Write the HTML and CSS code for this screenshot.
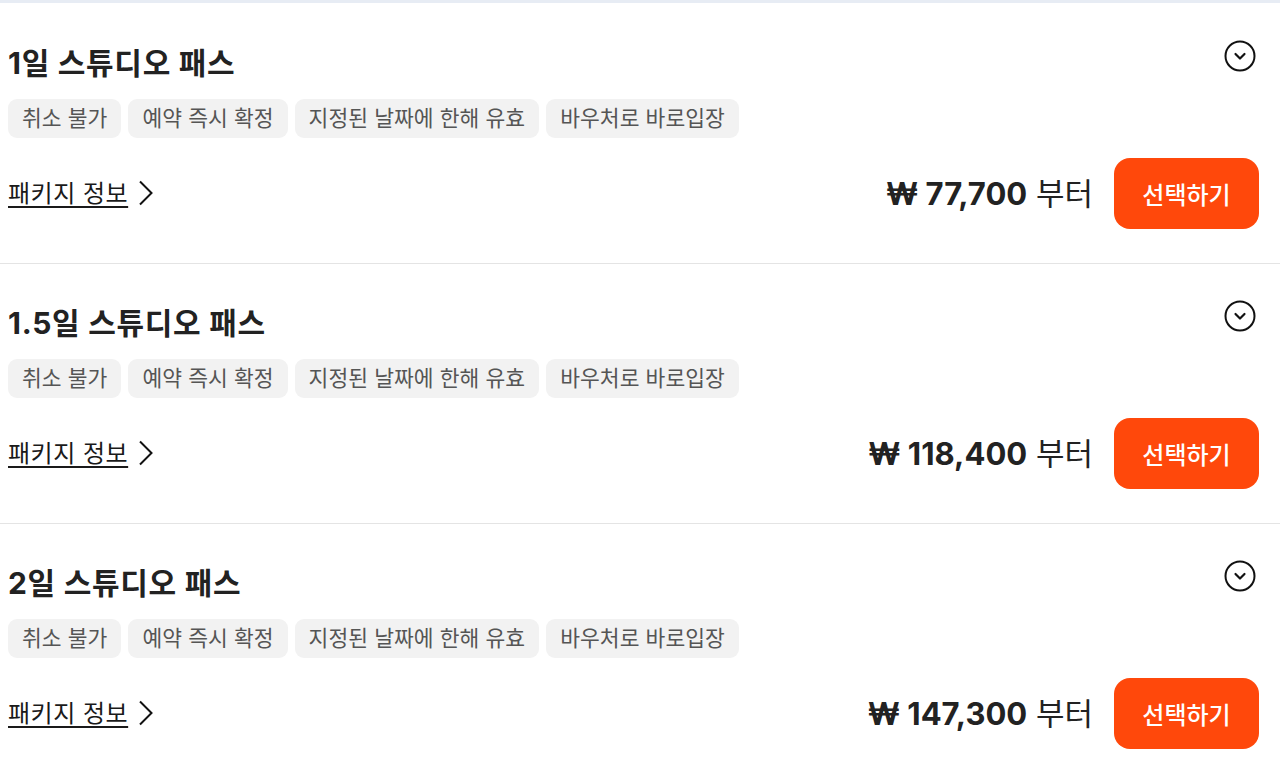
FILE: index.html
```html
<!DOCTYPE html>
<html lang="ko">
<head>
<meta charset="utf-8">
<title>패키지 선택</title>
<link rel="stylesheet" href="styles.css">
</head>
<body>
<div class="list">
  <section class="card">
    <div class="head">
      <h2 class="title">1일 스튜디오 패스</h2>
      <svg class="toggle" width="32" height="32" viewBox="0 0 32 32"><circle cx="16" cy="16" r="14.5" fill="none" stroke="#111" stroke-width="2"/><path d="M11.5 14l4.5 4.5 4.5-4.5" fill="none" stroke="#111" stroke-width="2.2" stroke-linecap="round" stroke-linejoin="round"/></svg>
    </div>
    <div class="tags">
      <span class="tag">취소 불가</span><span class="tag">예약 즉시 확정</span><span class="tag">지정된 날짜에 한해 유효</span><span class="tag">바우처로 바로입장</span>
    </div>
    <div class="foot">
      <a class="info" href="#"><span class="info-text">패키지 정보</span><svg class="chev" width="18" height="26" viewBox="0 0 18 26"><path d="M3 1.5l11.5 11.5L3 24.5" fill="none" stroke="#111" stroke-width="2"/></svg></a>
      <div class="buy">
        <div class="price"><b>₩ 77,700</b> 부터</div>
        <button class="select">선택하기</button>
      </div>
    </div>
  </section>
  <section class="card">
    <div class="head">
      <h2 class="title">1.5일 스튜디오 패스</h2>
      <svg class="toggle" width="32" height="32" viewBox="0 0 32 32"><circle cx="16" cy="16" r="14.5" fill="none" stroke="#111" stroke-width="2"/><path d="M11.5 14l4.5 4.5 4.5-4.5" fill="none" stroke="#111" stroke-width="2.2" stroke-linecap="round" stroke-linejoin="round"/></svg>
    </div>
    <div class="tags">
      <span class="tag">취소 불가</span><span class="tag">예약 즉시 확정</span><span class="tag">지정된 날짜에 한해 유효</span><span class="tag">바우처로 바로입장</span>
    </div>
    <div class="foot">
      <a class="info" href="#"><span class="info-text">패키지 정보</span><svg class="chev" width="18" height="26" viewBox="0 0 18 26"><path d="M3 1.5l11.5 11.5L3 24.5" fill="none" stroke="#111" stroke-width="2"/></svg></a>
      <div class="buy">
        <div class="price"><b>₩ 118,400</b> 부터</div>
        <button class="select">선택하기</button>
      </div>
    </div>
  </section>
  <section class="card">
    <div class="head">
      <h2 class="title">2일 스튜디오 패스</h2>
      <svg class="toggle" width="32" height="32" viewBox="0 0 32 32"><circle cx="16" cy="16" r="14.5" fill="none" stroke="#111" stroke-width="2"/><path d="M11.5 14l4.5 4.5 4.5-4.5" fill="none" stroke="#111" stroke-width="2.2" stroke-linecap="round" stroke-linejoin="round"/></svg>
    </div>
    <div class="tags">
      <span class="tag">취소 불가</span><span class="tag">예약 즉시 확정</span><span class="tag">지정된 날짜에 한해 유효</span><span class="tag">바우처로 바로입장</span>
    </div>
    <div class="foot">
      <a class="info" href="#"><span class="info-text">패키지 정보</span><svg class="chev" width="18" height="26" viewBox="0 0 18 26"><path d="M3 1.5l11.5 11.5L3 24.5" fill="none" stroke="#111" stroke-width="2"/></svg></a>
      <div class="buy">
        <div class="price"><b>₩ 147,300</b> 부터</div>
        <button class="select">선택하기</button>
      </div>
    </div>
  </section>
</div>
</body>
</html>
```
FILE: styles.css
```css
html, body {
  margin: 0;
  padding: 0;
  background: #fff;
}
body {
  font-family: "Inter", "Noto Sans CJK KR", sans-serif;
  color: #222;
  border-top: 3px solid #e7ecf4;
  overflow: hidden;
}
.list {
  display: flex;
  flex-direction: column;
}
.card {
  padding: 40px 21px 34px 8px;
  border-bottom: 1px solid #e4e4e4;
}
.card + .card {
  padding-top: 39px;
}
.head {
  display: flex;
  justify-content: space-between;
  align-items: flex-start;
  height: 40px;
}
.title {
  margin: 0;
  font-size: 30px;
  line-height: 40px;
  font-weight: 700;
  color: #222;
  letter-spacing: 0.7px;
}
.toggle {
  margin-top: -3px;
  margin-right: 3px;
}
.tags {
  display: flex;
  gap: 7px;
  margin-top: 16px;
}
.tag {
  height: 39px;
  line-height: 39px;
  padding: 0 14px;
  background: #f2f2f2;
  border-radius: 9px;
  font-size: 21.5px;
  letter-spacing: 0.05px;
  color: #555;
}
.foot {
  display: flex;
  justify-content: space-between;
  align-items: center;
  margin-top: 20px;
}
.info {
  display: flex;
  align-items: center;
  gap: 9px;
  color: #1a1a1a;
  text-decoration: none;
  font-size: 24px;
  letter-spacing: 0.5px;
  margin-top: -4px;
}
.info-text {
  text-decoration: underline;
  text-underline-offset: 4px;
  text-decoration-thickness: 1.5px;
}
.chev {
  margin-top: 2px;
}
.buy {
  display: flex;
  align-items: center;
  gap: 21px;
}
.price {
  font-size: 31px;
  color: #222;
  margin-top: -4px;
}
.price b {
  font-weight: 700;
}
.select {
  width: 145px;
  height: 71px;
  border: none;
  border-radius: 16px;
  background: #ff480b;
  color: #fff;
  font-family: "Noto Sans CJK KR", sans-serif;
  font-size: 24px;
  font-weight: 500;
}
```
